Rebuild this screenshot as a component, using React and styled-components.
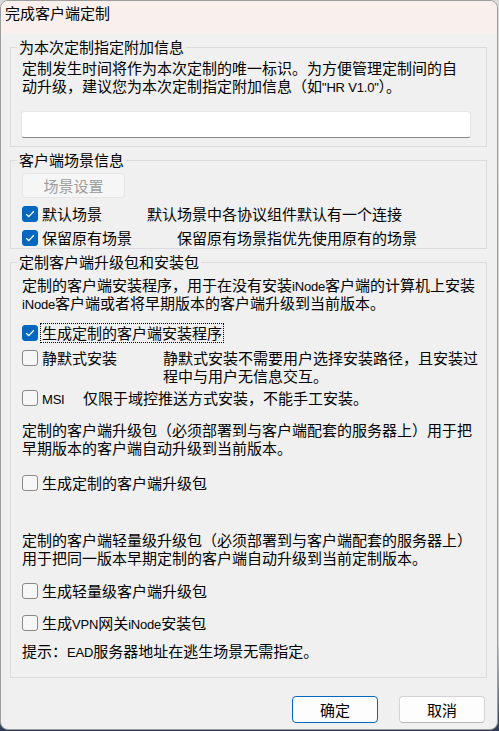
import styled, { createGlobalStyle } from 'styled-components';

const GlobalStyle = createGlobalStyle`
  html, body {
    margin: 0;
    padding: 0;
    height: 731px;
    overflow: hidden;
    background: linear-gradient(#dcdad8 0, #d4d4d4 88%, #2d3854 100%);
  }
  body {
    font-family: "Noto Sans CJK SC", "Liberation Sans", sans-serif;
    font-size: 15px;
    line-height: 18px;
    color: #000;
  }
`;

const Win = styled.div`
  width: 496px;
  height: 728px;
  border: 1px solid #9c9c9c;
  border-radius: 8px;
  overflow: hidden;
  background: #f0f0f0;
  display: flex;
  flex-direction: column;
`;

const TitleBar = styled.div`
  height: 32px;
  box-sizing: border-box;
  padding: 3px 0 0 4px;
  background: #f9f0ed;
  flex-shrink: 0;
`;

const Group = styled.fieldset`
  margin: ${(p) => p.$top || 0}px 10px 0 9px;
  padding: 0 0 ${(p) => p.$bottom || 0}px 11px;
  border: 1px solid #dcdcdc;
  min-inline-size: 0;
  display: flex;
  flex-direction: column;
  align-items: flex-start;
  flex-shrink: 0;
`;

const Legend = styled.legend`
  margin-left: -5px;
  padding: 0 2px;
  line-height: 18px;
`;

const Para = styled.div`
  margin-top: ${(p) => p.$top || 0}px;
  white-space: nowrap;
  line-height: 18px;
`;

const Lat = styled.span`
  font-family: "Liberation Sans", Arial, sans-serif;
  font-size: 13px;
  line-height: 13px;
  letter-spacing: -0.2px;
`;

const TextInput = styled.div`
  margin: 16px 0 0 -1px;
  width: 450px;
  height: 27px;
  box-sizing: border-box;
  background: #fff;
  border: 1px solid #e6e6e6;
  border-bottom-color: #8a8a8a;
  border-radius: 3px;
`;

const DisabledButton = styled.div`
  margin-top: 4px;
  width: 103px;
  height: 25px;
  box-sizing: border-box;
  display: flex;
  align-items: center;
  justify-content: center;
  background: #f6f6f6;
  border: 1px solid #e6e6e6;
  border-radius: 4px;
  color: #9d9d9d;
`;

const Row = styled.div`
  display: flex;
  align-items: ${(p) => (p.$multi ? 'flex-start' : 'center')};
  height: ${(p) => (p.$multi ? 36 : 20)}px;
  margin-top: ${(p) => p.$top || 0}px;
  white-space: nowrap;
`;

const Option = styled.div`
  display: flex;
  align-items: center;
  height: ${(p) => (p.$multi ? 18 : 20)}px;
  width: ${(p) => (p.$width ? `${p.$width}px` : 'auto')};
  flex-shrink: 0;
`;

const Box = styled.span`
  width: 16px;
  height: 16px;
  box-sizing: border-box;
  border-radius: 3px;
  flex-shrink: 0;
  display: flex;
  align-items: center;
  justify-content: center;
  background: ${(p) => (p.$checked ? '#0067c0' : '#f7f7f7')};
  border: 1px solid ${(p) => (p.$checked ? '#0067c0' : '#8a8a8a')};
`;

const Label = styled.span`
  margin-left: ${(p) => (p.$focus ? 2 : 4)}px;
  padding: ${(p) => (p.$focus ? '0 1px' : 0)};
  line-height: 18px;
  border: ${(p) => (p.$focus ? '1px dotted #000' : 'none')};
`;

const Desc = styled.div`
  line-height: 18px;
`;

const Footer = styled.div`
  display: flex;
  justify-content: flex-end;
  gap: 21px;
  margin-top: 18px;
  padding-right: 12px;
`;

const Button = styled.div`
  width: 86px;
  height: 27px;
  box-sizing: border-box;
  display: flex;
  align-items: center;
  justify-content: center;
  background: #fdfdfd;
  border: 1px solid ${(p) => (p.$primary ? '#0067c0' : '#d3d3d3')};
  border-bottom-color: ${(p) => (p.$primary ? '#0067c0' : '#b8b8b8')};
  border-radius: 4px;
`;

const Check = ({ checked }) => (
  <Box $checked={checked}>
    {checked && (
      <svg width="10" height="8" viewBox="0 0 10 8">
        <path d="M1.2 4.2 L3.8 6.6 L8.8 1.3" fill="none" stroke="#fff" strokeWidth="1.3" />
      </svg>
    )}
  </Box>
);

const CheckOption = ({ checked, width, multi, focus, children }) => (
  <Option $width={width} $multi={multi}>
    <Check checked={checked} />
    <Label $focus={focus}>{children}</Label>
  </Option>
);

export default function App() {
  return (
    <>
      <GlobalStyle />
      <Win>
        <TitleBar>完成客户端定制</TitleBar>

        <Group $top={5} $bottom={8}>
          <Legend>为本次定制指定附加信息</Legend>
          <Para $top={3}>
            定制发生时间将作为本次定制的唯一标识。为方便管理定制间的自
            <br />
            动升级，建议您为本次定制指定附加信息（如<Lat>"HR V1.0"</Lat>）。
          </Para>
          <TextInput />
        </Group>

        <Group $top={4}>
          <Legend>客户端场景信息</Legend>
          <DisabledButton>场景设置</DisabledButton>
          <Row $top={6}>
            <CheckOption checked width={125}>默认场景</CheckOption>
            <Desc>默认场景中各协议组件默认有一个连接</Desc>
          </Row>
          <Row $top={4}>
            <CheckOption checked width={155}>保留原有场景</CheckOption>
            <Desc>保留原有场景指优先使用原有的场景</Desc>
          </Row>
        </Group>

        <Group $top={4} $bottom={17}>
          <Legend>定制客户端升级包和安装包</Legend>
          <Para $top={5}>
            定制的客户端安装程序，用于在没有安装<Lat>iNode</Lat>客户端的计算机上安装
            <br />
            <Lat>iNode</Lat>客户端或者将早期版本的客户端升级到当前版本。
          </Para>
          <Row $top={11}>
            <CheckOption checked focus>生成定制的客户端安装程序</CheckOption>
          </Row>
          <Row $top={6} $multi>
            <CheckOption width={141} multi>静默式安装</CheckOption>
            <Desc>
              静默式安装不需要用户选择安装路径，且安装过
              <br />
              程中与用户无信息交互。
            </Desc>
          </Row>
          <Row $top={3}>
            <CheckOption width={61}><Lat>MSI</Lat></CheckOption>
            <Desc>仅限于域控推送方式安装，不能手工安装。</Desc>
          </Row>
          <Para $top={13}>
            定制的客户端升级包（必须部署到与客户端配套的服务器上）用于把
            <br />
            早期版本的客户端自动升级到当前版本。
          </Para>
          <Row $top={16}>
            <CheckOption>生成定制的客户端升级包</CheckOption>
          </Row>
          <Para $top={38}>
            定制的客户端轻量级升级包（必须部署到与客户端配套的服务器上）
            <br />
            用于把同一版本早期定制的客户端自动升级到当前定制版本。
          </Para>
          <Row $top={14}>
            <CheckOption>生成轻量级客户端升级包</CheckOption>
          </Row>
          <Row $top={12}>
            <CheckOption>生成<Lat>VPN</Lat>网关<Lat>iNode</Lat>安装包</CheckOption>
          </Row>
          <Para $top={9}>
            提示：<Lat>EAD</Lat>服务器地址在逃生场景无需指定。
          </Para>
        </Group>

        <Footer>
          <Button $primary>确定</Button>
          <Button>取消</Button>
        </Footer>
      </Win>
    </>
  );
}
